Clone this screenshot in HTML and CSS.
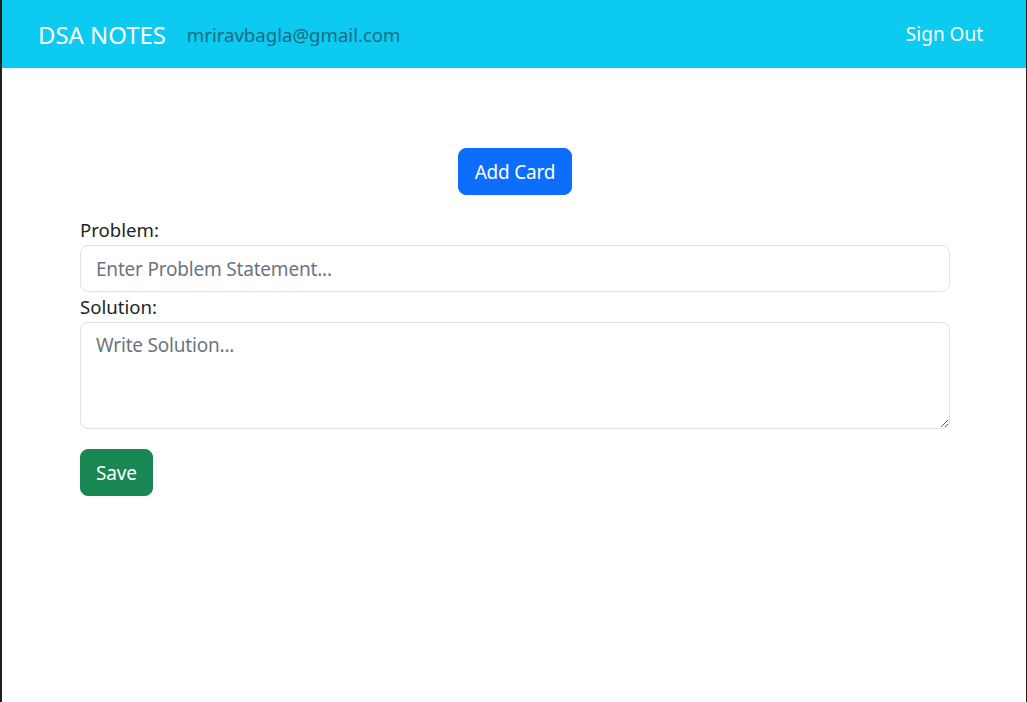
FILE: index.html
```html
<!DOCTYPE html>
<html lang="en">
<head>
<meta charset="utf-8">
<title>DSA Notes</title>
<link rel="stylesheet" href="styles.css">
</head>
<body>
<div class="frame">
  <nav class="navbar">
    <div class="nav-left">
      <span class="brand">DSA NOTES</span>
      <span class="nav-email">mriravbagla@gmail.com</span>
    </div>
    <a class="nav-link" href="#">Sign Out</a>
  </nav>
  <main class="content">
    <div class="center-row">
      <button class="btn btn-primary">Add Card</button>
    </div>
    <form class="note-form">
      <label class="form-label" for="problem">Problem:</label>
      <input class="form-control" id="problem" type="text" placeholder="Enter Problem Statement...">
      <label class="form-label" for="solution">Solution:</label>
      <textarea class="form-control textarea" id="solution" placeholder="Write Solution..."></textarea>
      <div class="actions">
        <button type="button" class="btn btn-success">Save</button>
      </div>
    </form>
  </main>
</div>
</body>
</html>
```

FILE: styles.css
```css
* { box-sizing: border-box; }
html, body { margin: 0; padding: 0; height: 100%; }
body {
  font-family: "Noto Sans", "Open Sans", sans-serif;
  color: #212529;
  background: #fff;
}
.frame {
  height: 702px;
  border-left: 2px solid #202020;
  border-right: 1px solid #202020;
  overflow: hidden;
}
.navbar {
  height: 68px;
  background: #0dcaf0;
  display: flex;
  align-items: center;
  justify-content: space-between;
  padding: 0 35px 0 36px;
}
.nav-left { display: flex; align-items: center; gap: 21px; }
.brand {
  color: #fff;
  font-size: 23.9px;
}
.nav-email {
  color: #1a6c84;
  font-size: 18.6px;
}
.nav-link {
  color: #fff;
  text-decoration: none;
  font-size: 19px;
  padding: 8px;
}
.content {
  width: 870px;
  margin-left: 78px;
  padding-top: 80px;
}
.center-row { display: flex; justify-content: center; }
.btn {
  font-family: inherit;
  font-size: 19px;
  line-height: 29px;
  padding: 9px 16px 7px;
  border: 1px solid transparent;
  border-radius: 8px;
  color: #fff;
  cursor: pointer;
  letter-spacing: -0.2px;
}
.btn-primary { background: #0d6efd; border-color: #0d6efd; }
.btn-success { background: #198754; border-color: #198754; padding-left: 15px; padding-right: 15px; }
.note-form { display: flex; flex-direction: column; margin-top: 20px; }
.form-label {
  font-size: 18.6px;
  line-height: 30px;
}
.form-control {
  font-family: inherit;
  font-size: 19px;
  line-height: 29px;
  padding: 8px 15px;
  border: 1px solid #dee2e6;
  border-radius: 8px;
  color: #212529;
  width: 100%;
  height: 47px;
  letter-spacing: -0.2px;
}
.form-control::placeholder { color: #6c757d; }
.textarea { height: 107px; resize: vertical; display: block; }
.actions { margin-top: 20px; }
```
